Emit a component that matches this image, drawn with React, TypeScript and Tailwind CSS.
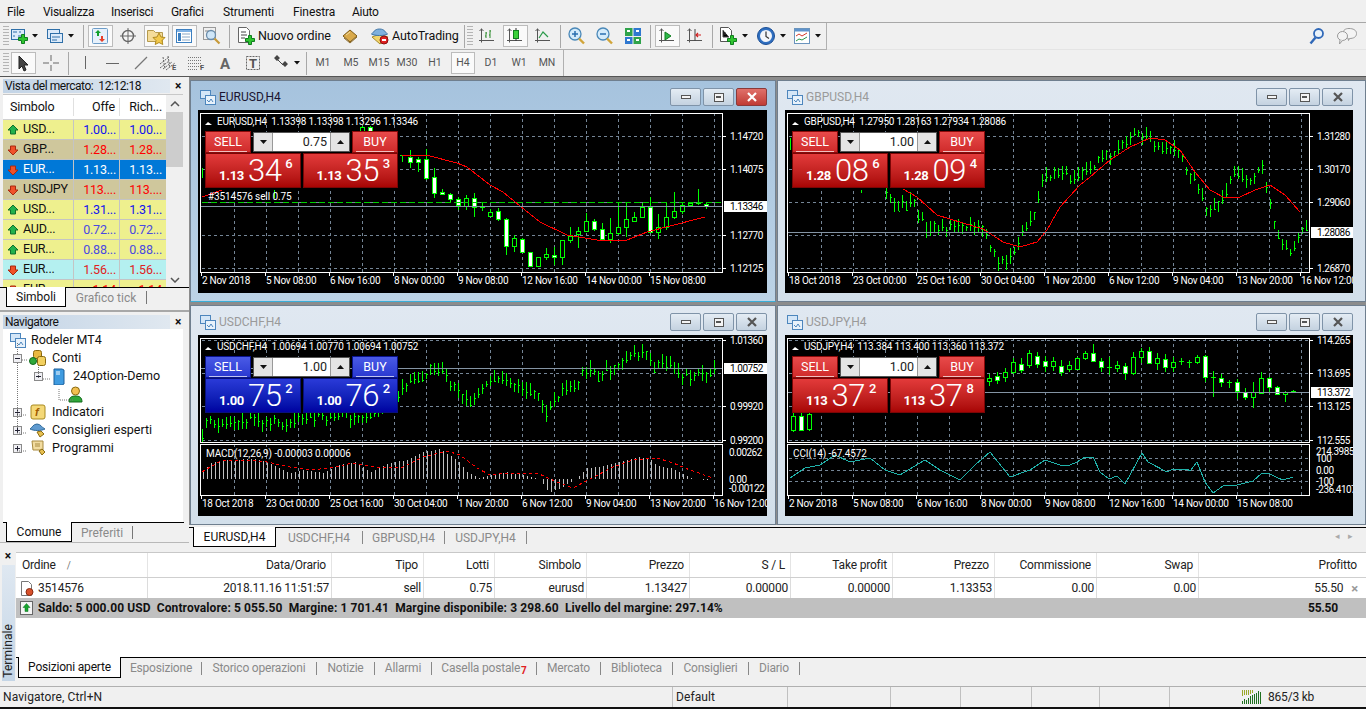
import React from 'react';

type Pt = [number, number];
// [bodyTop, bodyBottom, wickTop, wickBottom, white fill?]
type Cnd = [number, number, number, number, number];

const S: React.FC<{ w?: number; h?: number; children: React.ReactNode }> = ({ w = 18, h = 18, children }) => (
  <svg width={w} height={h} viewBox={`0 0 ${w} ${h}`} className="block shrink-0">
    {children}
  </svg>
);

const Plus: React.FC<{ x: number; y: number }> = ({ x, y }) => (
  <path transform={`translate(${x} ${y})`} d="M3.5 0.5h3v3h3v3h-3v3h-3v-3h-3v-3h3z" fill="#2fc42f" stroke="#0f7f1f" />
);

const Axis: React.FC = () => <path d="M3.5 1.5v14M1 13.5h15M1.5 4l2-2 2 2" fill="none" stroke="#555" />;

const Icons: Record<string, React.ReactNode> = {
  newChart: (
    <S><rect x="1.5" y="2.5" width="13" height="10" fill="#dbeafa" stroke="#2f6fa8" /><path d="M3 5h4M8 9h4M4 8v2M10 4v2" stroke="#2f6fa8" /><Plus x={8} y={7} /></S>
  ),
  profiles: (
    <S><rect x="1.5" y="2.5" width="12" height="9" fill="#dbeafa" stroke="#2f6fa8" /><rect x="4.5" y="6.5" width="12" height="9" fill="#dbeafa" stroke="#2f6fa8" /><path d="M6 10h8M6 13h5" stroke="#2f6fa8" /></S>
  ),
  market: (
    <S><rect x="1.5" y="1.5" width="15" height="15" rx="1" fill="#e7f1fb" stroke="#6c9cc8" /><path d="M7 3l3 3H8v3H6V6H4z" fill="#12a02c" /><path d="M11 15l-3-3h2V9h2v3h2z" fill="#e8402a" /></S>
  ),
  cross: (
    <S><circle cx="9" cy="9" r="5.5" fill="#f6f6f6" stroke="#666" strokeWidth="1.4" /><path d="M9 1v16M1 9h16" stroke="#666" /></S>
  ),
  nav: (
    <S w={20} h={18}><path d="M1.5 3.5h6l2 2h7v9h-15z" fill="#f4dc9a" stroke="#b59a4d" /><path d="M13 6l2 4 4 .5-3 3 .8 4-3.800-2-3.800 2 .8-4-3-3 4-.5z" fill="#f2c94c" stroke="#b08a1f" /></S>
  ),
  terminal: (
    <S><rect x="1.500" y="2.500" width="15" height="13" fill="#fff" stroke="#3c7fc0" /><rect x="2" y="3" width="14" height="2" fill="#7fb2e5" /><rect x="3" y="6" width="3" height="8" fill="#3c7fc0" /><path d="M7 7h8M7 10h8M7 13h8" stroke="#8aa7c4" /></S>
  ),
  tester: (
    <S w={20} h={20}><rect x="1.500" y="1.500" width="12" height="12" fill="#f0f0f0" stroke="#9a9a9a" /><path d="M3 5h4M6 8h5" stroke="#888" /><circle cx="9" cy="9" r="4.500" fill="#cfe6f8" stroke="#6a8caa" strokeWidth="1.300" /><path d="M12.500 12.500l5 5" stroke="#c79a3a" strokeWidth="2.200" /></S>
  ),
  order: (
    <S w={20} h={20}><path d="M2.500 1.500h8l3 3v12h-11z" fill="#fff" stroke="#666" /><path d="M5 6h5M5 9h6M5 12h4" stroke="#444" /><Plus x={9} y={9} /></S>
  ),
  book: (
    <S w={18} h={18}><path d="M2 9l7-6 7 6-7 6z" fill="#d9a94a" stroke="#7d5a14" /><path d="M3 11l6 5 7-6" fill="none" stroke="#8b6a2a" /><path d="M5 8l4-3" stroke="#f2dca0" /></S>
  ),
  auto: (
    <S w={20} h={20}><path d="M2 11l8 7 8-7-8-3z" fill="#f2d56a" stroke="#a78a2a" /><path d="M1.500 8c2-1 2.500-5 8-5s6 4 8 5c-3 2-13 2-16 0z" fill="#7fb0dd" stroke="#3f74a5" /><circle cx="14" cy="14" r="4" fill="#e02020" stroke="#8a1010" /><rect x="12" y="13" width="4" height="2" fill="#fff" /></S>
  ),
  bars: (
    <S><Axis /><path d="M8 5v6M7 9h1M8 6h1M12 3v8M11 8h1M12 4h1" stroke="#2a8a2a" /></S>
  ),
  candles: (
    <S><Axis /><path d="M10 1v13" stroke="#333" /><rect x="7.500" y="3.500" width="5" height="8" fill="#3ad13a" stroke="#0f7f1f" /></S>
  ),
  line: (
    <S><Axis /><path d="M5 11l4-6 5 5" fill="none" stroke="#2a9a4a" strokeWidth="1.200" /></S>
  ),
  zoomIn: (
    <S w={20} h={20}><circle cx="8" cy="8" r="6" fill="#d4ebfb" stroke="#4a88b8" strokeWidth="1.300" /><path d="M8 5v6M5 8h6" stroke="#2a6fb0" strokeWidth="1.500" /><path d="M12 12.500l5 5" stroke="#d1a53a" strokeWidth="2.400" /></S>
  ),
  zoomOut: (
    <S w={20} h={20}><circle cx="8" cy="8" r="6" fill="#d4ebfb" stroke="#4a88b8" strokeWidth="1.300" /><path d="M5 8h6" stroke="#2a6fb0" strokeWidth="1.500" /><path d="M12 12.500l5 5" stroke="#d1a53a" strokeWidth="2.400" /></S>
  ),
  tile: (
    <S><rect x="1" y="1" width="7.500" height="8" fill="#2fa34a" /><rect x="9.500" y="1" width="7.500" height="8" fill="#2f78d0" /><rect x="1" y="10" width="7.500" height="7" fill="#2f78d0" /><rect x="9.500" y="10" width="7.500" height="7" fill="#2fa34a" /><path d="M3 4h3M12 4h3M3 13h3M12 13h3" stroke="#fff" strokeWidth="2" /></S>
  ),
  scroll: (
    <S><Axis /><path d="M7 5l6 4-6 4z" fill="#2fb84a" stroke="#0f7f1f" /></S>
  ),
  shift: (
    <S><Axis /><path d="M9 2v12" stroke="#444" /><path d="M10 8h5M12 6l-2 2 2 2" fill="none" stroke="#d02020" strokeWidth="1.200" /></S>
  ),
  indicator: (
    <S w={20} h={20}><path d="M2.500 1.500h8l3 3v11h-11z" fill="#fff" stroke="#555" /><path d="M5 4v7h6M7 6v3" stroke="#444" /><Plus x={9} y={9} /></S>
  ),
  clock: (
    <S w={20} h={20}><circle cx="10" cy="10" r="8.500" fill="#2f6fc0" stroke="#1c4f96" /><circle cx="10" cy="10" r="6" fill="#f3f6fb" /><path d="M10 5.500v5l3 2" fill="none" stroke="#333" strokeWidth="1.200" /></S>
  ),
  template: (
    <S w={18} h={18}><rect x="1.500" y="1.500" width="15" height="15" fill="#fff" stroke="#6a94bd" /><rect x="2" y="2" width="14" height="2.500" fill="#5f93cc" /><path d="M3 9l3-2 3 2 5-3" fill="none" stroke="#d23a2a" /><path d="M3 14l3-2 3 1 5-3" fill="none" stroke="#2a9a4a" /></S>
  ),
  search: (
    <S><circle cx="10.500" cy="6.500" r="4.500" fill="#eaf3fb" stroke="#2f68b8" strokeWidth="1.800" /><path d="M7.500 10.500l-5 6" stroke="#2f68b8" strokeWidth="2.400" /></S>
  ),
  bubbles: (
    <S w={24} h={20}><path d="M13 2.500c4 0 7.500 1.500 7.500 5s-3 5-7 5l-1 2-.5-2.500c-2.500-.5-5-2-5-4.500 0-3.500 2.500-5 6-5z" fill="#f4f4f4" stroke="#9a9a9a" /><ellipse cx="6.500" cy="10" rx="5" ry="4.500" fill="#f4f4f4" stroke="#9a9a9a" /><path d="M4 14l-.5 4 3-3.500" fill="#f4f4f4" stroke="#9a9a9a" /></S>
  ),
  cursor: (
    <S><path d="M5 2v13l3-3 2 5 2-1-2-5h4z" fill="#444" stroke="#222" /></S>
  ),
  crossLine: (
    <S><path d="M9 1v6M9 11v6M1 9h6M11 9h6" stroke="#666" /></S>
  ),
  vline: <S><path d="M9.500 2v13" stroke="#666" /></S>,
  hline: <S><path d="M2 9.500h13" stroke="#666" /></S>,
  diag: <S><path d="M3 15L15 3" stroke="#777" strokeWidth="1.200" /></S>,
  channel: (
    <S w={20} h={18}><path d="M1 10l9-7M1 14l9-7M4 15l9-7M7 16l9-7M4 3l2 12M9 2l2 12" stroke="#666" strokeDasharray="2 1" /><text x="13" y="16" fontSize="7.500" fontWeight="700" fill="#555">E</text></S>
  ),
  fibo: (
    <S w={20} h={18}><path d="M1 3.500h14M1 6.500h14M1 9.500h14M1 12.500h14M1 15.500h10" stroke="#777" strokeDasharray="1 1" /><text x="13" y="16" fontSize="7.500" fontWeight="700" fill="#555">F</text></S>
  ),
  letterA: <S><text x="4" y="15" fontSize="15" fontWeight="700" fill="#666">A</text></S>,
  letterT: (
    <S><rect x="2.500" y="2.500" width="13" height="13" fill="none" stroke="#666" strokeDasharray="2 1" /><text x="5" y="14" fontSize="13" fontWeight="700" fill="#555">T</text></S>
  ),
  shapes: (
    <S><path d="M2 4l3-3 3 3-3 3zM10 10l3-3 3 3-3 3z" fill="#444" /><path d="M6 6l5 5" stroke="#444" /></S>
  ),
};

const Caret = () => (
  <svg width="6" height="4" viewBox="0 0 6 4" className="block shrink-0">
    <path d="M0 0h6L3 3.500z" fill="#111" />
  </svg>
);

const Btn: React.FC<{ icon: string; active?: boolean }> = ({ icon, active }) => (
  <div className="w-[28px] h-full flex items-center justify-center shrink-0">
    <div className={`w-[25px] h-[22px] flex items-center justify-center ${active ? 'bg-[#fafafa] border border-[#bcbcbc]' : ''}`}>
      {Icons[icon]}
    </div>
  </div>
);

const Drop: React.FC<{ icon: string; w: string; pl: string }> = ({ icon, w, pl }) => (
  <div className={`${w} ${pl} h-full flex items-center gap-[4px] shrink-0`}>
    {Icons[icon]}
    <Caret />
  </div>
);

const Sep = () => (
  <div className="w-[6px] h-full flex justify-center items-center shrink-0">
    <div className="w-px h-[23px] bg-[#a8a8a8]" />
  </div>
);

const Grip = () => (
  <div className="w-[6px] h-[21px] shrink-0 bg-[repeating-linear-gradient(to_bottom,#b4b4b4_0,#b4b4b4_1px,#f0f0f0_1px,#f0f0f0_3px)]" />
);

const Period: React.FC<{ label: string; active?: boolean }> = ({ label, active }) => (
  <div className="w-[28px] h-full flex items-center justify-center shrink-0">
    <div className={`w-[24px] h-[22px] flex items-center justify-center text-[10.500px] text-[#555] ${active ? 'bg-[#fafafa] border border-[#bcbcbc]' : ''}`}>
      {label}
    </div>
  </div>
);

const MenuBar = () => (
  <div className="h-[23px] shrink-0 flex items-center pl-[7px] pt-[2px] text-[12px] text-[#111] border-b border-[#a8a8a8] tracking-[-0.3px]">
    <span className="w-[36px]">File</span>
    <span className="w-[68px]">Visualizza</span>
    <span className="w-[60px]">Inserisci</span>
    <span className="w-[52px]">Grafici</span>
    <span className="w-[70px] tracking-[-0.1px]">Strumenti</span>
    <span className="w-[59px] tracking-[-0.1px]">Finestra</span>
    <span>Aiuto</span>
  </div>
);

const Toolbars = () => (
  <>
    <div className="h-[27px] shrink-0 flex">
      <div className="flex items-center h-full w-[827px] pl-[3px] border-b border-r border-[#b0b0b0]">
        <Grip />
        <Drop icon="newChart" w="w-[35px]" pl="pl-[1px]" />
        <Drop icon="profiles" w="w-[36px]" pl="pl-[2px]" />
        <Sep />
        <Btn icon="market" active />
        <Btn icon="cross" />
        <Btn icon="nav" active />
        <Btn icon="terminal" active />
        <Btn icon="tester" />
        <Sep />
        <div className="w-[104px] h-full flex items-center pl-[4px] gap-[2px] shrink-0 text-[12.500px] tracking-[-0.1px]">
          {Icons.order}
          <span>Nuovo ordine</span>
        </div>
        <Btn icon="book" />
        <div className="w-[97px] h-full flex items-center pl-[6px] gap-[2px] shrink-0 text-[12.500px] tracking-[-0.1px]">
          {Icons.auto}
          <span>AutoTrading</span>
        </div>
        <Sep />
        <Grip />
        <Btn icon="bars" />
        <Btn icon="candles" active />
        <Btn icon="line" />
        <Sep />
        <Btn icon="zoomIn" />
        <Btn icon="zoomOut" />
        <Btn icon="tile" />
        <Sep />
        <Btn icon="scroll" active />
        <Btn icon="shift" />
        <Sep />
        <Drop icon="indicator" w="w-[36px]" pl="pl-[3px]" />
        <Drop icon="clock" w="w-[36px]" pl="pl-[5px]" />
        <Drop icon="template" w="w-[36px]" pl="pl-[6px]" />
      </div>
      <div className="flex-1 flex items-center justify-end pr-[6px] gap-[10px] border-b border-[#e4e4e4]">
        {Icons.search}
        {Icons.bubbles}
      </div>
    </div>
    <div className="h-[27px] shrink-0 flex border-b border-[#555]">
      <div className="flex items-center h-full w-[564px] pl-[3px] border-r border-[#b0b0b0]">
        <Grip />
        <Btn icon="cursor" active />
        <Btn icon="crossLine" />
        <Sep />
        <Btn icon="vline" />
        <Btn icon="hline" />
        <Btn icon="diag" />
        <Btn icon="channel" />
        <Btn icon="fibo" />
        <Btn icon="letterA" />
        <Btn icon="letterT" />
        <Drop icon="shapes" w="w-[36px]" pl="pl-[5px]" />
        <Sep />
        <Period label="M1" />
        <Period label="M5" />
        <Period label="M15" />
        <Period label="M30" />
        <Period label="H1" />
        <Period label="H4" active />
        <Period label="D1" />
        <Period label="W1" />
        <Period label="MN" />
      </div>
    </div>
  </>
);

const UpArrow = () => (
  <svg width="12" height="12" viewBox="0 0 12 12" className="block shrink-0">
    <path d="M6 1l5 5H8.500v4h-5V6H1z" fill="#22b14c" stroke="#0f6f2c" />
  </svg>
);
const DownArrow = () => (
  <svg width="12" height="12" viewBox="0 0 12 12" className="block shrink-0">
    <path d="M6 11L1 6h2.500V2h5v4H11z" fill="#f0512a" stroke="#a82a10" />
  </svg>
);

const quotes = [
  { s: 'USD...', b: '1.00...', up: true, bg: 'bg-[#eef08e]', c: 'text-[#1010f0]' },
  { s: 'GBP...', b: '1.28...', up: false, bg: 'bg-[#cfc79c]', c: 'text-[#ff0000]' },
  { s: 'EUR...', b: '1.13...', up: false, bg: 'bg-[#0078d7]', c: 'text-white', sel: true },
  { s: 'USDJPY', b: '113....', up: false, bg: 'bg-[#cfc79c]', c: 'text-[#ff0000]' },
  { s: 'USD...', b: '1.31...', up: true, bg: 'bg-[#eef08e]', c: 'text-[#1010f0]' },
  { s: 'AUD...', b: '0.72...', up: true, bg: 'bg-[#eef08e]', c: 'text-[#4a4ae0]' },
  { s: 'EUR...', b: '0.88...', up: true, bg: 'bg-[#eef08e]', c: 'text-[#4a4ae0]' },
  { s: 'EUR...', b: '1.56...', up: false, bg: 'bg-[#b4f0f0]', c: 'text-[#e02020]' },
  { s: 'EUR', b: '1.14', up: false, bg: 'bg-[#eef08e]', c: 'text-[#ff0000]' },
];

const PanelTitle: React.FC<{ title: string }> = ({ title }) => (
  <div className="h-[14px] flex items-center shrink-0 pl-[3px]">
    <div className="w-[167px] h-[14px] bg-gradient-to-r from-[#c3d4e6] to-[#e0e8f0] pl-[2px] text-left text-[12px] tracking-[-0.45px] leading-[14px] text-[#111] whitespace-pre">
      {title}
    </div>
    <span className="ml-[5px] text-[12px] font-bold leading-none">×</span>
  </div>
);

const PanelTabs: React.FC<{ active: string; other: string; aw: string; ow: string }> = ({ active, other, aw, ow }) => (
  <div className="flex h-[20px] shrink-0 border-t border-black pl-[6px] bg-[#f0f0f0] text-[12px]">
    <div className={`${aw} bg-white border-x border-b border-black flex items-center justify-center -mt-px`}>{active}</div>
    <div className={`${ow} flex items-center justify-center text-[#8a8a8a]`}>{other}</div>
    <div className="w-px h-[13px] mt-[3px] bg-[#777]" />
  </div>
);

const MarketWatch = () => (
  <div className="h-[229px] flex flex-col pt-[2px] shrink-0">
    <PanelTitle title="Vista del mercato:  12:12:18" />
    <div className="flex h-[193px] ml-[3px] w-[180px] mt-px border-t border-[#c8c8c8] bg-white">
      <div className="w-[163px] overflow-hidden">
        <div className="h-[25px] flex items-center text-[12.500px] tracking-[-0.2px] border-b border-[#d0d0d0]">
          <span className="w-[71px] pl-[7px] border-r border-[#e0e0e0]">Simbolo</span>
          <span className="w-[46px] pr-[4px] text-right border-r border-[#e0e0e0]">Offe</span>
          <span className="w-[46px] pr-[4px] text-right">Rich...</span>
        </div>
        {quotes.map((q, i) => (
          <div key={i} className={`h-[20px] flex items-center text-[12.500px] tracking-[-0.2px] border-b border-[#c4c4c4] ${q.bg}`}>
            <span className={`w-[71px] flex items-center pl-[4px] gap-[4px] border-r border-[#c4c4c4] h-full ${q.sel ? 'text-white' : 'text-[#111]'}`}>
              {q.up ? <UpArrow /> : <DownArrow />}
              {q.s}
            </span>
            <span className={`w-[46px] pr-[3px] text-right border-r border-[#c4c4c4] h-full leading-[19px] ${q.c}`}>{q.b}</span>
            <span className={`w-[46px] pr-[4px] text-right h-full leading-[19px] ${q.c}`}>{q.b}</span>
          </div>
        ))}
      </div>
      <div className="flex-1 bg-[#f0f0f0] flex flex-col items-center pt-[6px] pb-[4px]">
        <svg width="10" height="6" viewBox="0 0 10 6"><path d="M1 5l4-4 4 4" fill="none" stroke="#555" strokeWidth="1.500" /></svg>
        <div className="w-full h-[55px] bg-[#cdcdcd] mt-[5px]" />
        <svg width="10" height="6" viewBox="0 0 10 6" className="mt-auto"><path d="M1 1l4 4 4-4" fill="none" stroke="#555" strokeWidth="1.500" /></svg>
      </div>
    </div>
    <PanelTabs active="Simboli" other="Grafico tick" aw="w-[60px]" ow="w-[80px]" />
  </div>
);

const Expander: React.FC<{ open?: boolean }> = ({ open }) => (
  <svg width="9" height="9" viewBox="0 0 9 9" className="block shrink-0">
    <rect x="0.500" y="0.500" width="8" height="8" fill="#f0f0f4" stroke="#8a8a8a" />
    <path d={open ? 'M2 4.500h5' : 'M2 4.500h5M4.500 2v5'} stroke="#223" />
  </svg>
);

const Coins = () => (
  <svg width="18" height="18" viewBox="0 0 18 18" className="block shrink-0">
    <rect x="4.500" y="1.500" width="8" height="8" rx="2" fill="#e8b840" stroke="#8a6a10" />
    <rect x="8.500" y="7.500" width="8" height="9" rx="2" fill="#f2d060" stroke="#8a6a10" />
    <circle cx="4" cy="12" r="3.500" fill="#2fa83a" stroke="#136a1d" />
  </svg>
);

const NavTree = () => (
  <div className="flex-1 relative bg-white ml-[3px] mr-[6px] text-[12.500px] pt-[2px]">
    <svg width="90" height="130" viewBox="0 0 90 130" className="absolute left-0 top-0 pointer-events-none">
      <path d="M14.500 14v85M15 31h9M35.500 34v16M40 50h8M56 60v11h14M14 86h10M14 104h10M14 122h10" fill="none" stroke="#777" strokeDasharray="1 1" />
    </svg>
    <div className="h-[18px] flex items-center pl-[7px] gap-[5px]">
      <svg width="16" height="15" viewBox="0 0 16 15" className="block shrink-0">
        <rect x="0.500" y="0.500" width="10" height="8" fill="#d4e6f7" stroke="#4d86bd" />
        <rect x="5.500" y="5.500" width="10" height="9" fill="#e8f2fb" stroke="#4d86bd" />
        <path d="M7 10l2 2 2-3 2 3" fill="none" stroke="#4d86bd" />
      </svg>
      Rodeler MT4
    </div>
    <div className="h-[18px] flex items-center pl-[10px] relative">
      <Expander open />
      <div className="ml-[7px] mr-[5px]"><Coins /></div>
      Conti
    </div>
    <div className="h-[18px] flex items-center pl-[31px]">
      <Expander open />
      <svg width="12" height="17" viewBox="0 0 12 17" className="block shrink-0 ml-[10px] mr-[8px]">
        <path d="M1 1h8l2 1v14l-2 1H1z" fill="#3f9be0" stroke="#1c5f9a" />
        <path d="M3 4h4M3 6h4" stroke="#fff" />
      </svg>
      24Option-Demo
    </div>
    <div className="h-[18px] flex items-center pl-[65px]">
      <svg width="15" height="17" viewBox="0 0 15 17" className="block">
        <circle cx="7.500" cy="5" r="4" fill="#f2c050" stroke="#8a6a10" />
        <path d="M1 16c0-5 3-6 6.500-6s6.500 1 6.500 6z" fill="#2fa83a" stroke="#136a1d" />
      </svg>
    </div>
    <div className="h-[18px] flex items-center pl-[10px]">
      <Expander />
      <svg width="16" height="16" viewBox="0 0 16 16" className="block shrink-0 ml-[8px] mr-[6px]">
        <rect x="1" y="1" width="14" height="14" rx="2" fill="#f4d878" stroke="#a88a20" />
        <text x="5" y="12" fontSize="11" fontStyle="italic" fontWeight="700" fill="#a05a00">f</text>
      </svg>
      Indicatori
    </div>
    <div className="h-[18px] flex items-center pl-[10px]">
      <Expander />
      <svg width="18" height="16" viewBox="0 0 18 16" className="block shrink-0 ml-[7px] mr-[5px]">
        <path d="M1 7c2-1 3-5 7-5s5 4 8 5c-4 2-11 2-15 0z" fill="#5f9ad0" stroke="#2f6a9a" />
        <path d="M8 10l4-1 3 3-4 3z" fill="#e8c050" stroke="#8a6a10" />
      </svg>
      Consiglieri esperti
    </div>
    <div className="h-[18px] flex items-center pl-[10px]">
      <Expander />
      <svg width="16" height="16" viewBox="0 0 16 16" className="block shrink-0 ml-[8px] mr-[6px]">
        <path d="M2 1h11v9H3z" fill="#f2dca0" stroke="#a88a40" />
        <path d="M5 4h5M5 6h5" stroke="#a88a40" />
        <path d="M9 11l3-2 3 3-3 3z" fill="#e8c050" stroke="#8a6a10" />
      </svg>
      Programmi
    </div>
  </div>
);

const Navigator = () => (
  <div className="flex-1 flex flex-col pt-[3px] mt-[4px] border-t-2 border-[#a8a8a8] min-h-0">
    <PanelTitle title="Navigatore" />
    <NavTree />
    <div className="flex h-[20px] shrink-0 border-t border-black ml-[3px] mr-[5px] pl-[3px] text-[12px] bg-[#f0f0f0]">
      <div className="w-[66px] bg-white border-x border-b border-black flex items-center justify-center -mt-px">Comune</div>
      <div className="w-[60px] flex items-center justify-center text-[#8a8a8a]">Preferiti</div>
      <div className="w-px h-[13px] mt-[3px] bg-[#777]" />
    </div>
    <div className="h-[7px] shrink-0 border-t border-[#b8b8b8]" />
  </div>
);

// ---- grafici ----

const interp = (pts: Pt[], x: number) => {
  if (x <= pts[0][0]) return pts[0][1];
  for (let i = 1; i < pts.length; i++) {
    if (x <= pts[i][0]) {
      const [x0, y0] = pts[i - 1];
      const [x1, y1] = pts[i];
      return y0 + ((y1 - y0) * (x - x0)) / (x1 - x0);
    }
  }
  return pts[pts.length - 1][1];
};

const rnd = (n: number) => {
  const v = Math.sin(n * 12.9898) * 43758.5453;
  return v - Math.floor(v);
};

const line = (pts: Pt[]) => 'M' + pts.map((p) => `${p[0]} ${p[1]}`).join('L');

const Candles: React.FC<{ start: number; data: Cnd[] }> = ({ start, data }) => (
  <g shapeRendering="crispEdges">
    {data.map((c, i) => {
      const x = start + i * 8;
      return (
        <g key={i}>
          <path d={`M${x + 0.5} ${c[2]}V${c[3]}`} stroke="#00ff00" />
          {c[1] - c[0] < 2 ? (
            <path d={`M${x - 2} ${c[0] + 0.5}h5`} stroke="#00ff00" />
          ) : (
            <rect x={x - 1.5} y={c[0] + 0.5} width={4} height={c[1] - c[0]} fill={c[4] ? '#fff' : '#000'} stroke="#00ff00" />
          )}
        </g>
      );
    })}
  </g>
);

// barre OHLC: solo la chiusura a destra, con scarto casuale sul punto medio
const Bars: React.FC<{ keys: Pt[]; from: number; to: number; seed: number; amp?: number }> = ({ keys, from, to, seed, amp = 6 }) => {
  let d = '';
  for (let x = from; x <= to; x += 4) {
    const j = (rnd(x * 3 + seed) - 0.5) * 9;
    const m = interp(keys, x) + j;
    const r1 = rnd(x + seed);
    const r2 = rnd(x * 2 + seed);
    const top = Math.round(m - 2 - r1 * amp);
    const bot = Math.round(m + 2 + r2 * amp);
    const c = Math.round(m - 2 + r1 * 4);
    d += `M${x + 0.5} ${top}V${bot}M${x + 1} ${c + 0.5}H${x + 2}`;
  }
  return <path d={d} stroke="#00ff00" fill="none" shapeRendering="crispEdges" />;
};

type ChartProps = {
  ox: number;
  oy: number;
  w: number;
  h: number;
  plotBottom: number;
  sub?: [number, number];
  hGrid: number[];
  subGrid?: number[];
  prices: [string, number][];
  subPrices?: [string, number][];
  times: string[];
  last: [string, number];
  header: string;
  subHeader?: string;
  children: React.ReactNode;
};

const Chart: React.FC<ChartProps> = ({ ox, oy, w, h, plotBottom, sub, hGrid, subGrid, prices, subPrices, times, last, header, subHeader, children }) => {
  const L = ox + 4;
  const R = ox + 525;
  const T = oy + 3;
  const axis = sub ? sub[1] : plotBottom;
  const vx: number[] = [];
  for (let x = L + 32; x < R; x += 32) vx.push(x);
  const dash = '3 3';
  return (
    <svg width={w} height={h} viewBox={`${ox} ${oy} ${w} ${h}`} className="block bg-black font-[family-name:Roboto,sans-serif]" fontSize="10" fill="#fff">
      <g stroke="#748596" shapeRendering="crispEdges">
        {vx.map((x) => (
          <path key={x} d={`M${x + 0.5} ${T}V${plotBottom}${sub ? `M${x + 0.5} ${sub[0]}V${sub[1]}` : ''}`} strokeDasharray={dash} />
        ))}
        {hGrid.map((y) => (
          <path key={y} d={`M${L} ${y + 0.5}H${R}`} strokeDasharray={dash} />
        ))}
        {subGrid?.map((y) => (
          <path key={y} d={`M${L} ${y + 0.5}H${R}`} strokeDasharray={dash} />
        ))}
      </g>
      {children}
      <path d={`M${L - 1} ${last[1] + 0.5}H${R}`} stroke="#8494a4" shapeRendering="crispEdges" />
      <g fill="none" stroke="#fff" shapeRendering="crispEdges">
        <rect x={L - 1.5} y={T + 0.5} width={R - L + 1} height={plotBottom - T} />
        {sub && <rect x={L - 1.5} y={sub[0] + 0.5} width={R - L + 1} height={sub[1] - sub[0]} />}
        {prices.map(([, y]) => (
          <path key={y} d={`M${R} ${y + 0.5}h3`} />
        ))}
        {times.map((_, i) => (
          <path key={i} d={`M${L + i * 64 - 0.500} ${axis}v4`} />
        ))}
      </g>
      <g letterSpacing="-0.5">
        {prices.map(([t, y]) => (
          <text key={t} x={R + 7} y={y + 4}>{t}</text>
        ))}
        {subPrices?.map(([t, y]) => (
          <text key={t} x={R + 6} y={y + 4}>{t}</text>
        ))}
      </g>
      <g letterSpacing="-0.25">
        {times.map((t, i) => (
          <text key={i} x={L + i * 64} y={axis + 12}>{t}</text>
        ))}
      </g>
      <rect x={R + 1} y={last[1] - 5} width={44} height={11} fill="#fff" />
      <text x={R + 7} y={last[1] + 4} fill="#000" letterSpacing="-0.5">{last[0]}</text>
      <path d={`M${L + 3} ${oy + 15}l3-3 4 3z`} fill="#fff" />
      <text x={L + 15} y={oy + 15} letterSpacing="-0.2" xmlSpace="preserve">{header}</text>
      {sub && subHeader && <text x={L + 4} y={sub[0] + 13} letterSpacing="-0.1">{subHeader}</text>}
    </svg>
  );
};

const Tri: React.FC<{ up?: boolean }> = ({ up }) => (
  <svg width="7" height="4" viewBox="0 0 7 4">
    <path d={up ? 'M0 4h7L3.500 0z' : 'M0 0h7L3.500 4z'} fill="#111" />
  </svg>
);

const TradePanel: React.FC<{ blue?: boolean; lot: string; big: [string, string]; small: string; sup: [string, string] }> = ({ blue, lot, big, small, sup }) => {
  const top = blue ? 'from-[#4a5ae6] to-[#2a38d0] border-[#0a148c]' : 'from-[#e84a4a] to-[#cf2a2a] border-[#8a0a0a]';
  const bot = blue ? 'from-[#2a3ad8] to-[#0000a0] border-[#08107c]' : 'from-[#e33a3a] to-[#a80404] border-[#7a0606]';
  const label = (t: string) => (
    <div className={`w-[46px] h-[22px] border bg-gradient-to-b ${top} flex flex-col items-center text-white text-[12.500px] leading-[19px]`}>
      <span className="h-[19px]">{t}</span>
      <div className="w-[38px] h-px bg-white/70" />
    </div>
  );
  const price = (i: number, pl: string) => (
    <div className={`w-[96px] h-[35px] border bg-gradient-to-b ${bot} flex items-end ${pl} text-white`}>
      <span className="text-[13px] font-bold leading-none mb-[5px] tracking-[-0.3px]">{small}</span>
      <span className="text-[31px] font-light leading-none ml-[4px] mb-[1px] tracking-[-0.5px]">{big[i]}</span>
      <span className="text-[13px] leading-none self-start mt-[3px] ml-[4px] font-medium">{sup[i]}</span>
    </div>
  );
  return (
    <div className="absolute left-[7px] top-[21px] w-[193px] text-white">
      <div className="flex items-start">
        {label('SELL')}
        <div className="flex w-[97px] h-[20px] mx-[2px] mt-px bg-white border border-[#555]">
          <div className="w-[19px] bg-[#e4e4e4] border-r border-[#999] flex items-center justify-center"><Tri /></div>
          <div className="flex-1 text-right pr-[3px] text-[12.500px] leading-[18px] text-[#222]">{lot}</div>
          <div className="w-[19px] bg-[#e4e4e4] border-l border-[#999] flex items-center justify-center"><Tri up /></div>
        </div>
        {label('BUY')}
      </div>
      <div className="flex gap-[2px]">
        {price(0, 'pl-[13px]')}
        {price(1, 'pl-[13px]')}
      </div>
    </div>
  );
};

const WinBtn: React.FC<{ kind: 'min' | 'max' | 'close'; red?: boolean }> = ({ kind, red }) => (
  <div className={`w-[31px] h-[18px] rounded-[2px] border flex items-center justify-center ${red ? 'bg-gradient-to-b from-[#e0706a] to-[#c03a34] border-[#8a3a3a]' : 'bg-gradient-to-b from-[#e4ecf4] to-[#c4d2e0] border-[#7f93a8]'}`}>
    {kind === 'min' && <div className="w-[10px] h-[4px] bg-[#f4f4f4] border border-[#555]" />}
    {kind === 'max' && <div className="w-[10px] h-[9px] bg-[#f4f4f4] border border-[#555] flex items-center justify-center"><div className="w-[5px] h-[2px] bg-[#555]" /></div>}
    {kind === 'close' && (
      <svg width="12" height="10" viewBox="0 0 12 10"><path d="M2 1l8 8M10 1l-8 8" stroke={red ? '#fff' : '#555'} strokeWidth="2.200" /></svg>
    )}
  </div>
);

const ChartWindow: React.FC<{ title: string; active?: boolean; children: React.ReactNode; panel: React.ReactNode; pr: string }> = ({ title, active, children, panel, pr }) => (
  <div className={`flex flex-col pl-[7px] ${pr} border border-[#6f7f8f] ${active ? 'bg-gradient-to-b from-[#a6c3de] to-[#bcd3e6] border-b-[#3aaed8]' : 'bg-gradient-to-b from-[#e0e8f1] to-[#d2dfea]'}`}>
    <div className="h-[29px] pt-[3px] flex items-center shrink-0">
      <svg width="16" height="15" viewBox="0 0 16 15" className="block ml-[2px] shrink-0">
        <rect x="0.500" y="0.500" width="10" height="8" fill="#d4e6f7" stroke="#4d86bd" />
        <rect x="5.500" y="5.500" width="10" height="9" fill="#e8f2fb" stroke="#4d86bd" />
        <path d="M7 10l2 2 2-3 2 3" fill="none" stroke="#4d86bd" />
      </svg>
      <span className={`ml-[3px] text-[12px] ${active ? 'text-[#1a1430]' : 'text-[#9a9a9a]'}`}>{title}</span>
      <div className="ml-auto flex gap-[2px]">
        <WinBtn kind="min" />
        <WinBtn kind="max" />
        <WinBtn kind="close" red={active} />
      </div>
    </div>
    <div className="relative">
      {children}
      {panel}
    </div>
  </div>
);

// ---- dati ----
const eurCandles: Cnd[] = [
  [155, 156, 155, 162, 1], [157, 162, 150, 168, 1], [159, 162, 157, 172, 1], [159, 178, 149, 180, 1],
  [177, 193, 168, 198, 1], [192, 194, 189, 195, 1], [194, 199, 193, 203, 1], [199, 205, 197, 210, 1],
  [198, 206, 195, 210, 0], [198, 207, 193, 217, 1], [207, 208, 203, 211, 1], [212, 216, 209, 217, 0],
  [211, 219, 208, 221, 1], [219, 246, 218, 255, 1], [238, 246, 235, 252, 0], [239, 252, 238, 253, 1],
  [252, 266, 252, 267, 1], [257, 266, 257, 267, 0], [254, 257, 248, 260, 0], [255, 257, 247, 265, 1],
  [240, 257, 240, 265, 0], [236, 240, 227, 243, 0], [231, 234, 227, 248, 0], [221, 231, 213, 232, 0],
  [221, 229, 219, 231, 1], [229, 239, 223, 241, 1], [233, 239, 218, 243, 0], [227, 233, 202, 235, 0],
  [219, 227, 202, 237, 0], [217, 221, 212, 222, 0], [207, 217, 203, 218, 0], [207, 232, 197, 233, 1],
  [227, 232, 214, 239, 0], [217, 227, 203, 230, 0], [211, 217, 192, 219, 0], [205, 211, 202, 214, 0],
  [203, 205, 202, 207, 0], [203, 204, 189, 205, 0], [204, 206, 202, 209, 1],
];
const eurMa: Pt[] = [
  [402, 155], [426, 155], [457, 163], [467, 167], [490, 185], [503, 192], [520, 206], [540, 222], [567, 235],
  [603, 241], [627, 240], [647, 232], [670, 226], [705, 217],
];

const jpyCandles: Cnd[] = [
  [358, 369, 357, 370, 0], [353, 358, 351, 360, 0], [353, 361, 344, 362, 1], [361, 367, 358, 372, 1],
  [367, 368, 357, 375, 1], [365, 368, 361, 372, 0], [366, 373, 363, 380, 1], [357, 373, 352, 375, 0],
  [351, 357, 348, 363, 0], [351, 363, 347, 364, 1], [358, 363, 353, 370, 0], [359, 367, 354, 372, 1],
  [362, 367, 357, 372, 0], [361, 362, 358, 365, 0], [362, 363, 360, 368, 0], [357, 362, 355, 364, 0],
  [356, 377, 355, 382, 1], [377, 378, 371, 397, 0], [378, 382, 374, 387, 1], [382, 383, 380, 388, 0],
  [382, 391, 379, 399, 1], [392, 397, 388, 400, 1], [392, 397, 382, 408, 0], [378, 393, 372, 394, 0],
  [378, 387, 377, 393, 1], [387, 394, 386, 395, 1], [392, 394, 391, 402, 0], [391, 392, 390, 393, 0],
];
const jpyLeft: Cnd[] = [
  [380, 384, 376, 392, 0], [378, 381, 374, 386, 0], [376, 380, 372, 384, 1], [372, 377, 368, 382, 0],
  [362, 372, 358, 374, 0], [364, 370, 358, 373, 1], [353, 365, 350, 368, 0], [356, 364, 352, 368, 1],
  [361, 366, 356, 372, 1], [361, 366, 357, 371, 0], [366, 372, 360, 376, 1], [365, 369, 361, 372, 0],
];
const jpyEarly: Cnd[] = [
  [416, 430, 412, 432, 0], [416, 430, 413, 431, 1], [414, 429, 410, 431, 0],
];
const cci: Pt[] = [
  [790, 478], [805, 468], [820, 465], [835, 455], [850, 462], [870, 458], [885, 470], [900, 475], [925, 460],
  [940, 470], [960, 480], [975, 465], [990, 452], [1010, 477], [1030, 470], [1045, 460], [1060, 465], [1070, 465],
  [1077, 462], [1085, 457], [1093, 457], [1100, 472], [1109, 479], [1117, 476], [1125, 484], [1142, 453], [1148, 462],
  [1167, 472], [1173, 469], [1187, 469], [1190, 471], [1197, 462], [1205, 482], [1213, 493], [1223, 486], [1237, 485],
  [1253, 481], [1262, 473], [1270, 474], [1278, 478], [1283, 480], [1293, 477],
];

const gbpKeys: Pt[] = [
  [885, 195], [895, 205], [915, 205], [918, 215], [925, 228], [955, 228], [975, 225], [985, 235], [995, 258], [1007, 262],
  [1013, 250], [1018, 240], [1025, 230], [1032, 220], [1037, 207], [1042, 177], [1060, 170], [1070, 180], [1080, 173],
  [1100, 160], [1120, 148], [1130, 135], [1140, 132], [1160, 146], [1170, 145], [1180, 155], [1200, 195], [1210, 212],
  [1220, 205], [1230, 180], [1240, 170], [1250, 185], [1262, 165], [1270, 205], [1280, 240], [1290, 250], [1305, 230],
];
const gbpMa: Pt[] = [
  [903, 189], [917, 197], [937, 215], [963, 223], [983, 229], [1003, 242], [1020, 247], [1037, 242], [1047, 230], [1060, 207],
  [1080, 185], [1090, 177], [1110, 160], [1130, 147], [1150, 138], [1165, 140], [1180, 150], [1195, 172], [1210, 190],
  [1225, 198], [1240, 197], [1255, 190], [1270, 185], [1285, 195], [1300, 212],
];
const chfKeys: Pt[] = [
  [202, 433], [207, 423], [223, 420], [240, 420], [257, 418], [273, 422], [290, 427], [303, 417], [323, 417], [357, 415],
  [370, 413], [403, 390], [413, 382], [423, 380], [432, 365], [443, 375], [452, 388], [463, 393], [473, 402], [480, 385],
  [507, 382], [523, 385], [538, 392], [547, 415], [553, 402], [560, 393], [573, 388], [582, 373], [593, 370], [600, 377],
  [613, 368], [627, 358], [643, 353], [653, 368], [667, 362], [677, 375], [690, 377], [703, 375], [715, 370],
];
const macdH: Pt[] = [
  [202, 473], [210, 463], [223, 460], [257, 459], [273, 465], [290, 473], [303, 470], [323, 473], [340, 465], [357, 462],
  [370, 472], [390, 463], [407, 460], [423, 452], [440, 449], [457, 460], [467, 472], [480, 478], [490, 475], [507, 472],
  [523, 475], [540, 479], [545, 488], [550, 492], [563, 487], [577, 478], [587, 468], [600, 467], [613, 464], [627, 460],
  [640, 457], [650, 459], [657, 466], [670, 468], [680, 472], [690, 478], [707, 480], [713, 479],
];
const macdS: Pt[] = [
  [202, 472], [210, 467], [223, 460], [247, 460], [267, 462], [290, 467], [310, 470], [330, 468], [353, 463], [377, 467],
  [403, 467], [423, 457], [447, 451], [460, 455], [477, 468], [490, 475], [507, 473], [537, 473], [557, 482], [573, 488],
  [590, 479], [613, 467], [633, 460], [657, 458], [673, 463], [690, 470], [713, 478],
];

const histBars = () => {
  let d = '';
  for (let x = 203; x <= 714; x += 4) {
    const t = Math.round(interp(macdH, x));
    d += `M${x + 0.5} 479V${t}`;
  }
  return d;
};

const t1 = ['2 Nov 2018', '5 Nov 08:00', '6 Nov 16:00', '8 Nov 00:00', '9 Nov 08:00', '12 Nov 16:00', '14 Nov 00:00', '15 Nov 08:00'];
const t2 = ['18 Oct 2018', '23 Oct 00:00', '25 Oct 16:00', '30 Oct 04:00', '1 Nov 20:00', '6 Nov 12:00', '9 Nov 04:00', '13 Nov 20:00', '16 Nov 12:00'];

const Terminal = () => {
  const cols = ['w-[132px]', 'w-[184px]', 'w-[92px]', 'w-[71px]', 'w-[92px]', 'w-[103px]', 'w-[101px]', 'w-[102px]', 'w-[102px]', 'w-[102px]', 'w-[102px]', 'flex-1'];
  const head = ['Ordine', 'Data/Orario', 'Tipo', 'Lotti', 'Simbolo', 'Prezzo', 'S / L', 'Take profit', 'Prezzo', 'Commissione', 'Swap', 'Profitto'];
  const row = ['3514576', '2018.11.16 11:51:57', 'sell', '0.75', 'eurusd', '1.13427', '0.00000', '0.00000', '1.13353', '0.00', '0.00', '55.50'];
  return (
    <div className="h-[134px] shrink-0 flex bg-[#f0f0f0]">
      <div className="w-[16px] shrink-0 flex flex-col items-center">
        <span className="text-[12px] font-bold leading-none mt-[1px] h-[15px]">×</span>
        <div className="w-[13px] flex-1 mb-[2px] bg-gradient-to-b from-[#dfe8f1] to-[#c4d5e6] flex items-end justify-center pb-[3px]">
          <span className="[writing-mode:vertical-rl] rotate-180 whitespace-nowrap text-[12px] leading-[13px] text-[#222] tracking-[0.1px]">Terminale</span>
        </div>
      </div>
      <div className="flex-1 flex flex-col pt-[3px] min-w-0">
        <div className="h-[106px] bg-white flex flex-col border-t border-[#c8c8c8] border-b-[1px] border-b-black text-[12px] tracking-[-0.2px]">
          <div className="h-[25px] flex shrink-0 border-b border-[#cfcfcf] text-[#222]">
            {head.map((h, i) => (
              <div key={i} className={`${cols[i]} shrink-0 flex items-center border-r border-[#e4e4e4] ${i === 0 ? 'pl-[6px]' : 'justify-end pr-[5px]'} ${i === 11 ? 'border-r-0 pr-[9px]' : ''}`}>
                {h}
                {i === 0 && <span className="ml-[11px] text-[#777] text-[10px]">/</span>}
              </div>
            ))}
          </div>
          <div className="h-[20px] flex shrink-0 text-[#222]">
            {row.map((v, i) => (
              <div key={i} className={`${cols[i]} shrink-0 flex items-center border-r border-[#dcdcdc] ${i === 0 ? 'pl-[4px]' : 'justify-end pr-[2px]'} ${i === 11 ? 'border-r-0' : ''}`}>
                {i === 0 && (
                  <svg width="14" height="15" viewBox="0 0 14 15" className="block mr-[4px] shrink-0">
                    <path d="M1.500 0.500h7l3 3v11h-10z" fill="#fff" stroke="#777" />
                    <circle cx="9.500" cy="11" r="3.500" fill="#d8502a" stroke="#8a2a10" />
                  </svg>
                )}
                {v}
                {i === 11 && <span className="ml-[8px] mr-[6px] text-[#999] text-[13px] font-bold leading-none">×</span>}
              </div>
            ))}
          </div>
          <div className="h-[20px] flex items-center shrink-0 bg-[#c0c0c0] font-bold text-[#111] pl-[4px] whitespace-pre">
            <svg width="13" height="14" viewBox="0 0 13 14" className="block mr-[5px] shrink-0">
              <rect x="0.500" y="0.500" width="12" height="13" fill="#f4f4f4" stroke="#666" />
              <path d="M6.500 2.500l3.500 4H8v4H5v-4H3z" fill="#17a62e" stroke="#0f6f20" strokeWidth="0.500" />
            </svg>
            <span className="tracking-[0.1px]">Saldo: 5 000.00 USD  Controvalore: 5 055.50  Margine: 1 701.41  Margine disponibile: 3 298.60  Livello del margine: 297.14%</span>
            <span className="ml-auto mr-[28px]">55.50</span>
          </div>
        </div>
        <div className="flex h-[20px] shrink-0 text-[12px] tracking-[-0.2px] pl-[2px] text-[#8a8a8a] items-center">
          <div className="w-[103px] h-[21px] -mt-px bg-white border-x border-b border-black flex items-center justify-center text-[#111]">Posizioni aperte</div>
          {[
            ['Esposizione', 'w-[81px]'], ['Storico operazioni', 'w-[115px]'], ['Notizie', 'w-[58px]'], ['Allarmi', 'w-[57px]'],
            ['Casella postale', 'w-[105px]'], ['Mercato', 'w-[64px]'], ['Biblioteca', 'w-[72px]'], ['Consiglieri', 'w-[76px]'], ['Diario', 'w-[51px]'],
          ].map(([t, w]) => (
            <div key={t} className={`${w} shrink-0 flex items-center justify-center border-r border-[#888] h-[13px]`}>
              {t}
              {t === 'Casella postale' && <span className="text-[#e02020] text-[10px] font-bold self-end leading-[8px] ml-px">7</span>}
            </div>
          ))}
        </div>
      </div>
    </div>
  );
};

const StatusBar = () => {
  const seps = ['w-[673px]', 'w-[115px]', 'w-[103px]', 'w-[70px]', 'w-[71px]', 'w-[68px]', 'w-[70px]', 'w-[65px]'];
  const txt = ['Navigatore, Ctrl+N', 'Default', '', '', '', '', '', ''];
  return (
    <div className="flex-1 flex flex-col">
      <div className="h-[4px] border-b border-[#b0b0b0] shrink-0" />
      <div className="h-[20px] flex shrink-0 text-[12px] tracking-[0.1px] text-[#222]">
        {seps.map((w, i) => (
          <div key={i} className={`${w} shrink-0 flex items-center pl-[3px] ${i < 7 ? 'border-r border-[#c0c0c0]' : ''}`}>{txt[i]}</div>
        ))}
        <div className="flex items-center gap-[5px] pl-[6px] tracking-[-0.2px]">
          <svg width="22" height="14" viewBox="0 0 22 14" className="block shrink-0" shapeRendering="crispEdges">
            <path d="M1.500 14v-3M3.500 14v-5M5.500 14v-4M7.500 14v-6M9.500 14v-8M11.500 14v-9M13.500 14v-10M15.500 14v-11M17.500 14v-13M19.500 14v-12" stroke="#1f6f1f" />
            <path d="M1.500 0v6M3.500 0v5M5.500 0v5M7.500 0v5M9.500 0v4M11.500 0v3" stroke="#9aa82a" />
          </svg>
          865/3 kb
        </div>
      </div>
      <div className="flex-1 bg-[#111]" />
    </div>
  );
};

export default function App() {
  return (
    <div className="w-[1366px] h-[709px] overflow-hidden flex flex-col bg-[#f0f0f0] text-[#111] font-[family-name:Roboto,sans-serif]">
      <MenuBar />
      <Toolbars />
      <div className="h-[472px] shrink-0 flex">
        <div className="w-[189px] shrink-0 flex flex-col">
          <MarketWatch />
          <Navigator />
        </div>
        <div className="flex-1 flex flex-col min-w-0">
          <div className="h-[449px] bg-[#8c8c8c] pt-[3px] grid grid-cols-[586px_589px] grid-rows-[222px_220px] gap-y-[3px] gap-x-[1px] pl-px">
            <ChartWindow
              title="EURUSD,H4"
              active
              pr="pr-[8px]"
              panel={<TradePanel lot="0.75" small="1.13" big={['34', '35']} sup={['6', '3']} />}
            >
              <Chart
                ox={198}
                oy={110}
                w={569}
                h={183}
                plotBottom={272}
                hGrid={[136, 169, 202, 235, 268]}
                prices={[['1.14720', 136], ['1.14075', 169], ['1.12770', 235], ['1.12125', 268]]}
                times={t1}
                last={['1.13346', 206]}
                header="EURUSD,H4  1.13398 1.13398 1.13296 1.13346"
              >
                <Candles start={362} data={[[127, 131, 126, 135, 0], [127, 131, 126, 135, 1]]} />
                <Candles start={402} data={eurCandles} />
                <path d="M202.500 168V178M274.500 190V198" stroke="#00ff00" shapeRendering="crispEdges" />
                <path d={line([[202, 197], [222, 190]])} stroke="#ff0000" fill="none" shapeRendering="crispEdges" />
                <path d={line(eurMa)} stroke="#ff0000" fill="none" shapeRendering="crispEdges" />
                <path d="M202 202.500H724" stroke="#00d000" strokeDasharray="6 3" shapeRendering="crispEdges" />
                <text x="208" y="200" fill="#fff" letterSpacing="-0.1">#3514576 sell 0.75</text>
              </Chart>
            </ChartWindow>
            <ChartWindow
              title="GBPUSD,H4"
              pr="pr-[12px]"
              panel={<TradePanel lot="1.00" small="1.28" big={['08', '09']} sup={['6', '4']} />}
            >
              <Chart
                ox={785}
                oy={110}
                w={568}
                h={183}
                plotBottom={272}
                hGrid={[136, 169, 202, 235, 268]}
                prices={[['1.31280', 136], ['1.30170', 169], ['1.29060', 202], ['1.26870', 268]]}
                times={t2}
                last={['1.28086', 232]}
                header="GBPUSD,H4  1.27950 1.28163 1.27934 1.28086"
              >
                <path d="M790.500 138V150M861.500 190V193" stroke="#00ff00" shapeRendering="crispEdges" />
                <Bars keys={gbpKeys} from={886} to={1306} seed={11} amp={7} />
                <path d={line(gbpMa)} stroke="#ff0000" fill="none" shapeRendering="crispEdges" />
              </Chart>
            </ChartWindow>
            <ChartWindow
              title="USDCHF,H4"
              pr="pr-[8px]"
              panel={<TradePanel blue lot="1.00" small="1.00" big={['75', '76']} sup={['2', '2']} />}
            >
              <Chart
                ox={198}
                oy={335}
                w={569}
                h={181}
                plotBottom={442}
                sub={[444, 495]}
                hGrid={[340, 373, 406, 440]}
                prices={[['1.01360', 340], ['0.99920', 406], ['0.99200', 440]]}
                subPrices={[['0.00262', 452], ['0.00', 479], ['-0.00122', 488]]}
                times={t2}
                last={['1.00752', 368]}
                header="USDCHF,H4  1.00694 1.00770 1.00694 1.00752"
                subHeader="MACD(12,26,9) -0.00003 0.00006"
              >
                <Bars keys={chfKeys} from={202} to={714} seed={5} amp={7} />
                <path d={histBars()} stroke="#c0c0c0" shapeRendering="crispEdges" />
                <path d={line(macdS)} stroke="#ff0000" strokeDasharray="3 3" fill="none" shapeRendering="crispEdges" />
              </Chart>
            </ChartWindow>
            <ChartWindow
              title="USDJPY,H4"
              pr="pr-[12px]"
              panel={<TradePanel lot="1.00" small="113" big={['37', '37']} sup={['2', '8']} />}
            >
              <Chart
                ox={785}
                oy={335}
                w={568}
                h={181}
                plotBottom={442}
                sub={[444, 495]}
                hGrid={[340, 373, 406, 440]}
                subGrid={[458, 470, 481]}
                prices={[['114.265', 340], ['113.695', 373], ['113.125', 406], ['112.555', 440]]}
                subPrices={[['214.3985', 451], ['100', 458], ['0.00', 470], ['-100', 481], ['-236.4107', 489]]}
                times={t1}
                last={['113.372', 392]}
                header="USDJPY,H4  113.384 113.400 113.360 113.372"
                subHeader="CCI(14) -67.4572"
              >
                <Candles start={793} data={jpyEarly} />
                <Candles start={981} data={jpyLeft} />
                <Candles start={1077} data={jpyCandles} />
                <path d={line(cci)} stroke="#20b2aa" fill="none" shapeRendering="crispEdges" />
              </Chart>
            </ChartWindow>
          </div>
          <div className="h-[22px] shrink-0 flex items-start border-t border-black mt-[2px] pl-[4px] text-[12px] text-[#8a8a8a]">
            <div className="w-[83px] h-[20px] bg-white border-x border-b border-black text-[#111] flex items-center justify-center -mt-px">EURUSD,H4</div>
            <div className="w-[87px] h-[13px] mt-[3px] flex items-center justify-center border-r border-[#888]">USDCHF,H4</div>
            <div className="w-[82px] h-[13px] mt-[3px] flex items-center justify-center border-r border-[#888]">GBPUSD,H4</div>
            <div className="w-[82px] h-[13px] mt-[3px] flex items-center justify-center border-r border-[#888]">USDJPY,H4</div>
            <span className="ml-auto mr-[5px] mt-[2px] text-[9px] text-[#aaa] tracking-[8px]">◂▸</span>
          </div>
        </div>
      </div>
      <Terminal />
      <StatusBar />
    </div>
  );
}
